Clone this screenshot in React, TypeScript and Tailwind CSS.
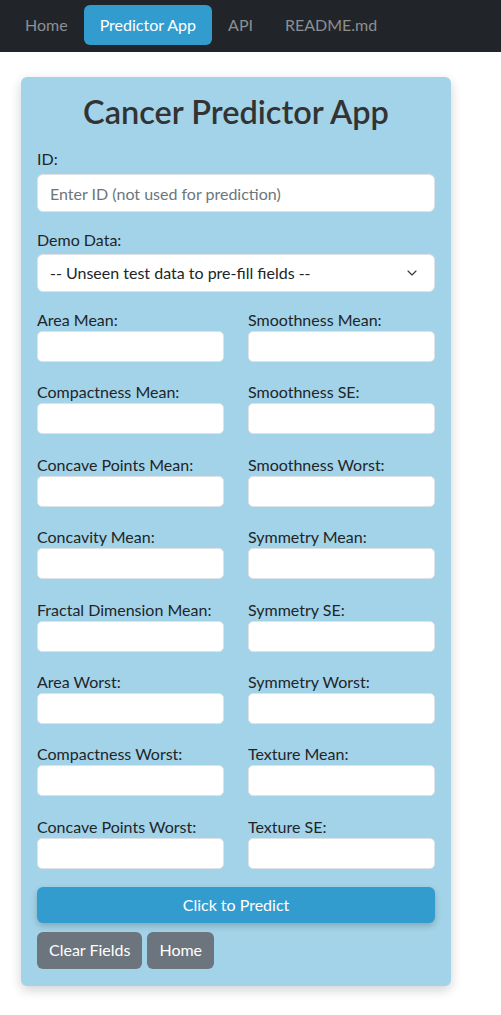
import { ChevronDown } from 'lucide-react'

const fields: [string, string][] = [
  ['Area Mean:', 'Smoothness Mean:'],
  ['Compactness Mean:', 'Smoothness SE:'],
  ['Concave Points Mean:', 'Smoothness Worst:'],
  ['Concavity Mean:', 'Symmetry Mean:'],
  ['Fractal Dimension Mean:', 'Symmetry SE:'],
  ['Area Worst:', 'Symmetry Worst:'],
  ['Compactness Worst:', 'Texture Mean:'],
  ['Concave Points Worst:', 'Texture SE:'],
]

function Field({ label }: { label: string }) {
  return (
    <div className="flex flex-col">
      <label className="text-[16px] leading-[23px] text-[#212529]">{label}</label>
      <input className="h-[31px] w-full rounded-[5px] border border-[#dee2e6] bg-white px-2 text-sm outline-none" />
    </div>
  )
}

export default function App() {
  return (
    <div className="min-h-screen bg-white font-['Lato','Liberation_Sans',sans-serif] text-[#212529]">
      {/* Top nav */}
      <nav className="flex h-[52px] items-center bg-[#212529] pb-[2px] pl-[9px]">
        <a className="px-4 py-2 text-[16px] leading-6 text-[#8c8f93]">Home</a>
        <a className="rounded-[6px] bg-[#339ccf] px-4 py-2 text-[16px] leading-6 text-white">Predictor App</a>
        <a className="px-4 py-2 text-[16px] leading-6 text-[#8c8f93]">API</a>
        <a className="px-4 py-2 text-[16px] leading-6 text-[#8c8f93]">README.md</a>
      </nav>

      {/* Form card */}
      <div className="ml-[21px] mt-[25px] w-[430px] rounded-[6px] bg-[#a3d3e8] px-4 pb-[17px] pt-4 shadow-[0_4px_12px_rgba(0,0,0,0.18)]">
        <h1 className="mb-[16px] text-center text-[32.5px] font-semibold leading-[38px] text-[#333333]">
          Cancer Predictor App
        </h1>

        <label className="block text-[16px] leading-6">ID:</label>
        <input
          placeholder="Enter ID (not used for prediction)"
          className="mt-[3px] h-[38px] w-full rounded-[6px] border border-[#dee2e6] bg-white px-3 text-[16px] placeholder:text-[#6c757d] outline-none"
        />

        <label className="mt-4 block text-[16px] leading-6">Demo Data:</label>
        <div className="mt-[2px] flex h-[38px] w-full items-center justify-between rounded-[6px] border border-[#dee2e6] bg-white pl-3 pr-[14px] text-[16px]">
          <span>-- Unseen test data to pre-fill fields --</span>
          <ChevronDown className="h-4 w-4 text-[#343a40]" strokeWidth={1.75} />
        </div>

        <div className="mt-4 grid grid-cols-2 gap-x-6 gap-y-[18.4px]">
          {fields.map(([a, b]) => (
            <>
              <Field key={a} label={a} />
              <Field key={b} label={b} />
            </>
          ))}
        </div>

        <button className="mt-[18px] h-9 w-full rounded-[6px] bg-[#339ccf] text-[16px] text-white shadow-[0_3px_6px_rgba(0,0,0,0.2)]">
          Click to Predict
        </button>

        <div className="mt-[9px] flex gap-[5px]">
          <button className="h-[37px] rounded-[6px] bg-[#6c757d] px-3 text-[16px] text-white">Clear Fields</button>
          <button className="h-[37px] rounded-[6px] bg-[#6c757d] px-3 text-[16px] text-white">Home</button>
        </div>
      </div>
      <div className="h-[30px]" />
    </div>
  )
}
